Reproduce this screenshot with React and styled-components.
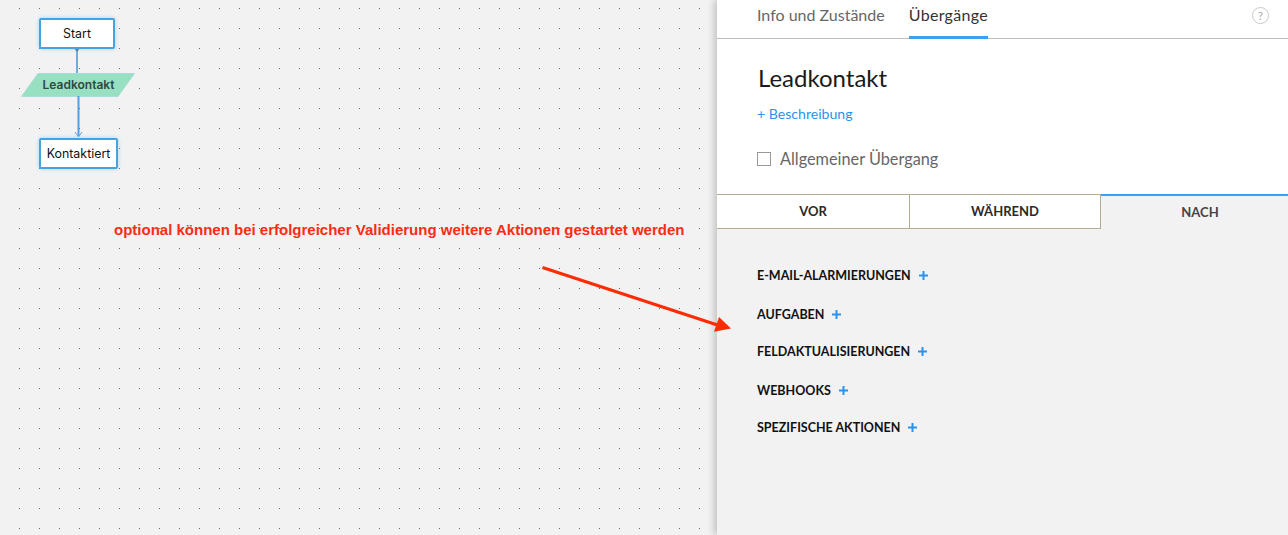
import React from 'react'
import styled, { createGlobalStyle } from 'styled-components'

const GlobalStyle = createGlobalStyle`
  html, body {
    margin: 0;
    padding: 0;
    height: 100%;
    overflow: hidden;
    background: #f2f2f2;
  }
  * { box-sizing: border-box; }
`

const Page = styled.div`
  position: relative;
  display: flex;
  width: 1288px;
  height: 535px;
  overflow: hidden;
  font-family: Lato, "Open Sans", sans-serif;
`

const Canvas = styled.div`
  position: relative;
  flex: 0 0 717px;
  height: 100%;
  background-color: #f2f2f2;
  background-image: radial-gradient(circle at 0.5px 0.5px, #666 0.6px, transparent 0.9px);
  background-size: 20px 20px;
  background-position: 19px 8px;
`

const FlowBox = styled.div`
  position: absolute;
  left: ${p => p.$x}px;
  top: ${p => p.$y}px;
  width: ${p => p.$w}px;
  height: 31px;
  padding-bottom: 1px;
  display: flex;
  align-items: center;
  justify-content: center;
  background: #fff;
  border: 2px solid #45a3e0;
  border-radius: 2px;
  box-shadow: 0 0 4px #a3d3f2;
  font-family: Inter, Roboto, sans-serif;
  font-size: 12.4px;
  color: #111;
`

const FlowLabel = styled.div`
  position: absolute;
  left: 22px;
  top: 73px;
  width: 113px;
  height: 24px;
  padding-bottom: 1px;
  display: flex;
  align-items: center;
  justify-content: center;
  font-family: Inter, Roboto, sans-serif;
  font-size: 12px;
  font-weight: 600;
  color: #2c4a40;
`

const Wires = styled.svg`
  position: absolute;
  left: 0;
  top: 0;
`

const Note = styled.div`
  position: absolute;
  left: 114px;
  top: 221px;
  font-family: "Liberation Sans", Arial, sans-serif;
  font-size: 15px;
  font-weight: 700;
  line-height: 17px;
  color: #fb2c12;
  white-space: nowrap;
`

const RedArrow = styled.svg`
  position: absolute;
  left: 530px;
  top: 255px;
  z-index: 3;
`

const Panel = styled.div`
  position: relative;
  z-index: 2;
  flex: 1;
  display: flex;
  flex-direction: column;
  background: #f2f2f2;
  box-shadow: -3px 0 7px rgba(0, 0, 0, 0.2);
`

const TabBar = styled.div`
  display: flex;
  align-items: stretch;
  height: 39px;
  padding: 0 19px 0 40px;
  gap: 24px;
  background: #fff;
  border-bottom: 1px solid #bdbdbd;
`

const Tab = styled.div`
  display: flex;
  align-items: center;
  height: 39px;
  padding-bottom: 7px;
  font-size: 16px;
  letter-spacing: ${p => (p.$active ? '0.3px' : '0')};
  color: ${p => (p.$active ? '#333' : '#666')};
  border-bottom: 3px solid ${p => (p.$active ? '#3d9ff0' : 'transparent')};
`

const Help = styled.div`
  margin-left: auto;
  align-self: flex-start;
  margin-top: 7px;
  width: 17px;
  height: 17px;
  border: 1px solid #c8c8c8;
  border-radius: 50%;
  display: flex;
  align-items: center;
  justify-content: center;
  font-size: 11px;
  color: #aaa;
`

const Header = styled.div`
  height: 155px;
  padding: 25px 40px 0 41px;
  background: #fff;
`

const Title = styled.h1`
  margin: 0;
  font-size: 24px;
  font-weight: 400;
  line-height: 28px;
  color: #1a1a1a;
`

const AddLink = styled.div`
  margin-top: 13px;
  margin-left: -1px;
  font-size: 14.1px;
  line-height: 18px;
  color: #2a93f0;
`

const CheckRow = styled.label`
  display: flex;
  align-items: center;
  gap: 9px;
  margin-top: 26px;
  margin-left: -1px;
  font-size: 16.3px;
  line-height: 20px;
  color: #666;
`

const Check = styled.span`
  width: 14px;
  height: 14px;
  background: #fff;
  border: 1px solid #999;
`

const Segments = styled.div`
  display: flex;
  height: 35px;
`

const Segment = styled.div`
  flex: 0 0 ${p => p.$w}px;
  display: flex;
  align-items: center;
  justify-content: center;
  padding-bottom: 2px;
  padding-left: ${p => (p.$active ? '11px' : '0')};
  font-size: 13px;
  font-weight: 700;
  color: ${p => (p.$active ? '#444' : '#2a2a2a')};
  background: ${p => (p.$active ? '#f2f2f2' : '#fff')};
  border-style: solid;
  border-color: #b5ab90;
  border-width: 1px ${p => (p.$active ? 0 : '1px')} 1px 0;
  ${p => p.$active && 'border-top: 2px solid #3d9ff0; border-bottom: 0;'}
`

const ActionList = styled.div`
  padding: 36px 40px 0;
`

const ActionRow = styled.div`
  display: flex;
  align-items: center;
  gap: 8px;
  height: 20px;
  margin-top: ${p => p.$gap}px;
  font-size: 12.5px;
  font-weight: 700;
  color: #111;
`

const Plus = styled.svg`
  flex: none;
`

const actions = [
  ['E-MAIL-ALARMIERUNGEN', 0],
  ['AUFGABEN', 19],
  ['FELDAKTUALISIERUNGEN', 17],
  ['WEBHOOKS', 19],
  ['SPEZIFISCHE AKTIONEN', 17],
]

const App = () => (
  <Page>
    <GlobalStyle />
    <Canvas>
      <Wires width="160" height="180">
        <polygon points="21.5,96.5 38,73.5 134.5,73.5 118,96.5" fill="#98e0c2" stroke="#a9dcdc" />
        <path d="M77 48V73" stroke="#4a90d9" strokeWidth="1.5" fill="none" />
        <path d="M74.5 49h5l-2.5 2.5z" fill="#27506f" />
        <path d="M78.5 96V136" stroke="#5a9be0" strokeWidth="2" fill="none" />
        <path d="M75 132l3.5 5 3.5-5" stroke="#5a9be0" strokeWidth="1" fill="none" />
      </Wires>
      <FlowBox $x={39} $y={18} $w={76}>Start</FlowBox>
      <FlowLabel>Leadkontakt</FlowLabel>
      <FlowBox $x={39} $y={138} $w={79}>Kontaktiert</FlowBox>
      <Note>optional können bei erfolgreicher Validierung weitere Aktionen gestartet werden</Note>
    </Canvas>
    <Panel>
      <TabBar>
        <Tab>Info und Zustände</Tab>
        <Tab $active>Übergänge</Tab>
        <Help>?</Help>
      </TabBar>
      <Header>
        <Title>Leadkontakt</Title>
        <AddLink>+ Beschreibung</AddLink>
        <CheckRow><Check />Allgemeiner Übergang</CheckRow>
      </Header>
      <Segments>
        <Segment $w={193}>VOR</Segment>
        <Segment $w={191}>WÄHREND</Segment>
        <Segment $w={187} $active>NACH</Segment>
      </Segments>
      <ActionList>
        {actions.map(([label, gap]) => (
          <ActionRow key={label} $gap={gap}>
            {label}
            <Plus width="9" height="9" viewBox="0 0 9 9">
              <path d="M4.5 0v9M0 4.5h9" stroke="#2a93f0" strokeWidth="2" />
            </Plus>
          </ActionRow>
        ))}
      </ActionList>
    </Panel>
    <RedArrow width="210" height="90">
      <path d="M12.5 12.5L192 71.5" stroke="#fb2c02" strokeWidth="3" />
      <polygon points="201,73.5 184,76.7 189,62" fill="#fb2c02" />
    </RedArrow>
  </Page>
)

export default App
